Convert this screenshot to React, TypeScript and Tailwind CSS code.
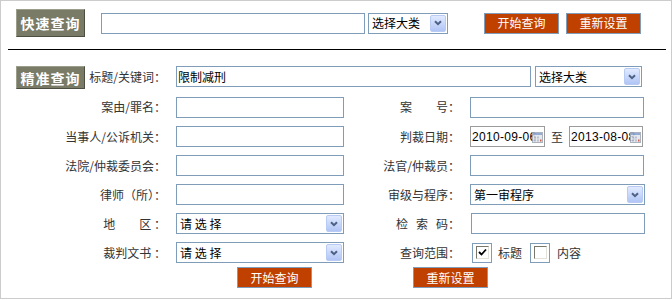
import React from 'react';

function Arrow() {
  return (
    <span className="m-px flex h-[17px] w-[16px] shrink-0 items-center justify-center rounded-[2px] border border-[#b8cbf4] bg-linear-to-b from-[#e1eaff] to-[#b1c5f5]">
      <svg width="8" height="6" viewBox="0 0 8 6">
        <path d="M1 1.2 L4 4.2 L7 1.2" fill="none" stroke="#4d6185" strokeWidth="2" />
      </svg>
    </span>
  );
}

function Select({ value, className }: { value: string; className: string }) {
  return (
    <div className={`flex h-[21px] items-center justify-between border border-[#7f9db9] bg-white pl-[3px] text-black ${className}`}>
      <span>{value}</span>
      <Arrow />
    </div>
  );
}

function Field({ value = '', className }: { value?: string; className: string }) {
  return (
    <input
      readOnly
      defaultValue={value}
      className={`h-[21px] border border-[#7f9db9] bg-white px-[1px] text-[12px] text-black outline-none ${className}`}
    />
  );
}

function DateBox({ value, className }: { value: string; className: string }) {
  return (
    <div className={`relative flex h-[21px] items-center overflow-hidden whitespace-nowrap border border-[#9c9c9c] bg-white pl-px font-['Liberation_Sans',sans-serif] text-[12px] tracking-[0.3px] text-black ${className}`}>
      {value}
      <svg className="absolute right-px top-[5px] opacity-90" width="11" height="11" viewBox="0 0 11 11">
        <rect x="0.5" y="0.5" width="10" height="10" fill="#e3e6ec" stroke="#a3abb9" />
        <rect x="1" y="1" width="9" height="2" fill="#8aa3cf" />
        <path d="M2 4.5h2v2H2zM5 4.5h2v2H5zM2 7.5h2v2H2zM5 7.5h2v2H5z" fill="#b4bccb" />
        <rect x="8" y="7.5" width="1.5" height="2" fill="#d24b3a" />
      </svg>
    </div>
  );
}

function Check({ checked }: { checked?: boolean }) {
  return (
    <span className="flex h-[20px] w-[20px] items-center justify-center border border-[#7f9db9] bg-white">
      <span className="flex h-[13px] w-[13px] items-center justify-center border border-t-[#77776b] border-l-[#77776b] border-r-[#e2e2da] border-b-[#e2e2da] bg-white">
        {checked && (
          <svg width="9" height="9" viewBox="0 0 9 9">
            <path d="M1 4 L3.5 6.5 L8 1.5" fill="none" stroke="#000" strokeWidth="1.8" />
          </svg>
        )}
      </span>
    </span>
  );
}

function Btn({ label, className = '' }: { label: string; className?: string }) {
  return (
    <button className={`h-[21px] w-[75px] border border-[#7f9db9] bg-[#c04000] text-[12px] leading-none text-white ${className}`}>
      {label}
    </button>
  );
}

function Tag({ label, className }: { label: string; className: string }) {
  return (
    <div className={`flex w-[69px] items-center justify-center border border-t-[#9c9e8c] border-l-[#9c9e8c] border-r-[#4c4e42] border-b-[#4c4e42] bg-[#797b67] text-[14px] font-bold tracking-[1px] text-white ${className}`}>
      {label}
    </div>
  );
}

export default function App() {
  return (
    <div className="h-[299px] w-[672px] border border-[#cccccc] bg-white font-['Noto_Sans_CJK_SC',sans-serif] text-[12px] leading-none text-[#333]">
      {/* Quick search */}
      <div className="flex items-center pl-[15px] pt-[8px]">
        <Tag label="快速查询" className="h-[28px]" />
        <Field className="ml-[16px] w-[264px]" />
        <Select value="选择大类" className="ml-[3px] w-[80px]" />
        <Btn label="开始查询" className="ml-[36px]" />
        <Btn label="重新设置" className="ml-[7px]" />
      </div>

      <div className="ml-[7px] mt-[12px] h-px w-[658px] bg-black" />

      {/* Precise search */}
      <div className="mt-[11px] flex flex-col">
        <div className="flex h-[31px] items-center pl-[15px]">
          <div className="flex w-[150px] items-center justify-between">
            <Tag label="精准查询" className="mt-[2px] h-[23px]" />
            <span>标题/关键词：</span>
          </div>
          <Field value="限制减刑" className="ml-[10px] w-[355px]" />
          <Select value="选择大类" className="ml-[4px] w-[107px]" />
        </div>

        <div className="flex h-[30px] items-center pl-[15px]">
          <span className="w-[150px] text-right">案由/罪名：</span>
          <Field className="ml-[10px] w-[168px]" />
          <span className="w-[116px] text-right">案　　号：</span>
          <Field className="ml-[10px] w-[174px]" />
        </div>

        <div className="flex h-[29px] items-center pl-[15px]">
          <span className="w-[150px] text-right">当事人/公诉机关：</span>
          <Field className="ml-[10px] w-[168px]" />
          <span className="w-[116px] text-right">判裁日期：</span>
          <DateBox value="2010-09-06" className="ml-[10px] w-[75px]" />
          <span className="mx-[6px]">至</span>
          <DateBox value="2013-08-08" className="w-[74px]" />
        </div>

        <div className="flex h-[29px] items-center pl-[15px]">
          <span className="w-[150px] text-right">法院/仲裁委员会：</span>
          <Field className="ml-[10px] w-[168px]" />
          <span className="w-[116px] text-right">法官/仲裁员：</span>
          <Field className="ml-[10px] w-[174px]" />
        </div>

        <div className="flex h-[29px] items-center pl-[15px]">
          <span className="w-[150px] text-right">律师（所）：</span>
          <Field className="ml-[10px] w-[168px]" />
          <span className="w-[116px] text-right">审级与程序：</span>
          <Select value="第一审程序" className="ml-[10px] w-[175px]" />
        </div>

        <div className="flex h-[29px] items-center pl-[15px]">
          <span className="w-[150px] text-right">地　　区 ：</span>
          <Select value="请 选 择" className="ml-[10px] w-[168px]" />
          <span className="flex w-[116px] justify-end">
            <span className="mr-[8px]">检</span>
            <span className="mr-[8px]">索</span>
            <span>码：</span>
          </span>
          <Field className="ml-[11px] w-[174px]" />
        </div>

        <div className="flex h-[29px] items-center pl-[15px]">
          <span className="w-[150px] text-right">裁判文书 ：</span>
          <Select value="请 选 择" className="ml-[10px] w-[168px]" />
          <span className="w-[116px] text-right">查询范围：</span>
          <span className="ml-[12px] flex items-center">
            <Check checked />
            <span className="ml-[6px]">标题</span>
            <span className="ml-[8px]">
              <Check />
            </span>
            <span className="ml-[7px]">内容</span>
          </span>
        </div>

        <div className="flex pl-[236px]">
          <Btn label="开始查询" />
          <Btn label="重新设置" className="ml-[101px]" />
        </div>
      </div>
    </div>
  );
}
